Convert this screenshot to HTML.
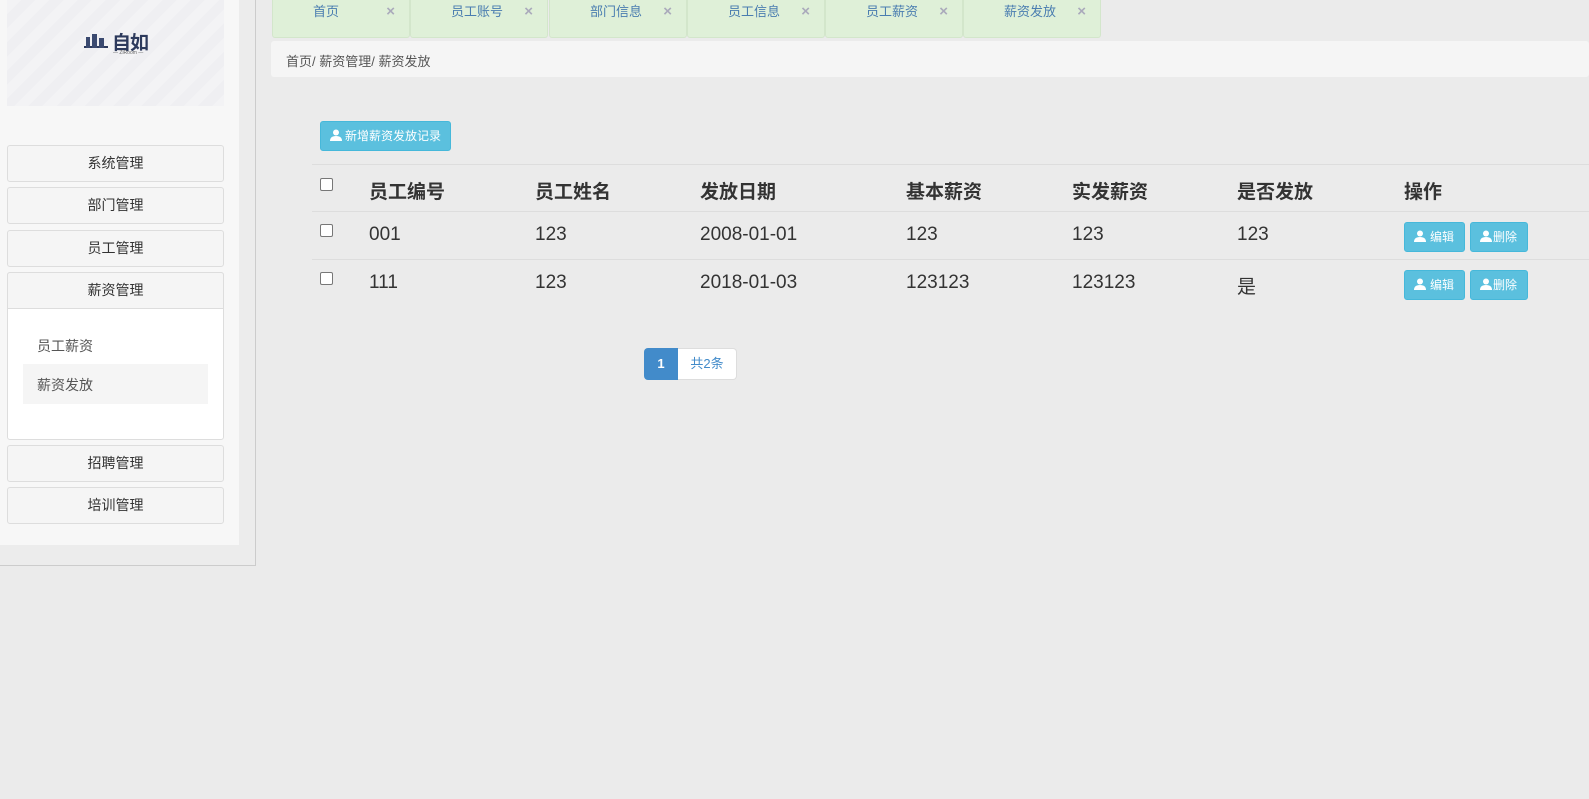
<!DOCTYPE html>
<html><head><meta charset="utf-8"><style>
*{box-sizing:border-box;margin:0;padding:0}
body{width:1589px;height:799px;background:#ebebeb;font-family:"Liberation Sans","Noto Sans CJK SC",sans-serif;position:relative;overflow:hidden;color:#333}
.a{position:absolute}
.side{left:0;top:0;width:256px;height:566px;border-right:1px solid #ccc;border-bottom:1px solid #ccc;background:#ececec}
.sp{left:0;top:0;width:239px;height:545px;background:#f7f7f7}
.logo{left:7px;top:0;width:217px;height:106px;background:repeating-linear-gradient(135deg,#f3f3f5 0 10px,#efeff2 10px 20px)}
.mi{left:7px;width:217px;height:37px;border:1px solid #ddd;border-radius:3px;background:#f5f5f5;font-size:14px;text-align:center;line-height:35px;color:#333}
.tab{top:0;height:38px;width:138px;background:#dff0d8;border:1px solid #d3e6cb;border-top:none;border-radius:0 0 3px 3px;font-size:13px;color:#4a7db0;line-height:24px;padding-left:40px}
.tab i{position:absolute;right:14px;top:0;font-style:normal;color:#aab;font-size:15px;font-weight:bold}
.btn{background:#5bc0de;border:1px solid #46b8da;border-radius:3px;color:#fff;font-size:12px}
.th{font-size:19px;font-weight:bold;color:#333}
.td{font-size:19px;color:#333}
.cb{width:13px;height:13px;border:1px solid #777;border-radius:2px;background:#fff}
.hl{left:312px;width:1277px;height:1px;background:#ddd}
</style></head><body>
<div class="a side"></div>
<div class="a sp"></div>
<div class="a logo"></div>
<div class="a" style="left:84px;top:34px;width:24px;height:14px;border-bottom:2px solid #2d3a5c">
<div class="a" style="left:2px;top:3px;width:4px;height:11px;background:#3b4a70"></div>
<div class="a" style="left:8px;top:0;width:5px;height:14px;background:#3b4a70"></div>
<div class="a" style="left:15px;top:4px;width:5px;height:10px;background:#3b4a70"></div></div>
<div class="a" style="left:112px;top:28px;font-size:19px;font-weight:bold;color:#2d3a5c;letter-spacing:-1px">自如</div>
<div class="a" style="left:113px;top:50px;font-size:5px;color:#666">— ZiRoom —</div>
<div class="a mi" style="top:145px">系统管理</div>
<div class="a mi" style="top:187px">部门管理</div>
<div class="a mi" style="top:230px">员工管理</div>
<div class="a" style="left:7px;top:272px;width:217px;height:168px;border:1px solid #ddd;border-radius:3px;background:#fff"></div>
<div class="a mi" style="top:272px;border-radius:3px 3px 0 0">薪资管理</div>
<div class="a" style="left:37px;top:336px;font-size:14px;color:#555">员工薪资</div>
<div class="a" style="left:23px;top:364px;width:185px;height:40px;background:#f5f5f5"></div>
<div class="a" style="left:37px;top:375px;font-size:14px;color:#555">薪资发放</div>
<div class="a mi" style="top:445px">招聘管理</div>
<div class="a mi" style="top:487px">培训管理</div>

<div class="a tab" style="left:272px">首页<i>×</i></div>
<div class="a tab" style="left:410px">员工账号<i>×</i></div>
<div class="a tab" style="left:549px">部门信息<i>×</i></div>
<div class="a tab" style="left:687px">员工信息<i>×</i></div>
<div class="a tab" style="left:825px">员工薪资<i>×</i></div>
<div class="a tab" style="left:963px">薪资发放<i>×</i></div>
<div class="a" style="left:271px;top:41px;width:1318px;height:36px;background:#f5f5f5;border-radius:3px"></div>
<div class="a" style="left:286px;top:51px;font-size:13px;color:#555">首页/ 薪资管理/ 薪资发放</div>

<div class="a btn" style="left:320px;top:121px;width:131px;height:30px;line-height:28px;padding-left:24px">新增薪资发放记录</div>
<svg class="a" style="left:330px;top:129px" width="12" height="12" viewBox="0 0 12 12"><circle cx="6" cy="3.5" r="3" fill="#fff"/><path d="M0 12 Q0 7 6 7 Q12 7 12 12Z" fill="#fff"/></svg>

<div class="hl a" style="top:164px"></div>
<div class="hl a" style="top:211px"></div>
<div class="hl a" style="top:259px"></div>
<div class="a cb" style="left:320px;top:178px"></div>
<div class="a cb" style="left:320px;top:224px"></div>
<div class="a cb" style="left:320px;top:272px"></div>
<div class="a th" style="left:369px;top:177px">员工编号</div>
<div class="a th" style="left:535px;top:177px">员工姓名</div>
<div class="a th" style="left:700px;top:177px">发放日期</div>
<div class="a th" style="left:906px;top:177px">基本薪资</div>
<div class="a th" style="left:1072px;top:177px">实发薪资</div>
<div class="a th" style="left:1237px;top:177px">是否发放</div>
<div class="a th" style="left:1404px;top:177px">操作</div>
<div class="a td" style="left:369px;top:224px">001</div>
<div class="a td" style="left:535px;top:224px">123</div>
<div class="a td" style="left:700px;top:224px">2008-01-01</div>
<div class="a td" style="left:906px;top:224px">123</div>
<div class="a td" style="left:1072px;top:224px">123</div>
<div class="a td" style="left:1237px;top:224px">123</div>
<div class="a td" style="left:369px;top:272px">111</div>
<div class="a td" style="left:535px;top:272px">123</div>
<div class="a td" style="left:700px;top:272px">2018-01-03</div>
<div class="a td" style="left:906px;top:272px">123123</div>
<div class="a td" style="left:1072px;top:272px">123123</div>
<div class="a td" style="left:1237px;top:272px">是</div>

<div class="a btn" style="left:1404px;top:222px;width:61px;height:30px;line-height:28px;padding-left:25px">编辑</div>
<div class="a btn" style="left:1470px;top:222px;width:58px;height:30px;line-height:28px;padding-left:22px">删除</div>
<div class="a btn" style="left:1404px;top:270px;width:61px;height:30px;line-height:28px;padding-left:25px">编辑</div>
<div class="a btn" style="left:1470px;top:270px;width:58px;height:30px;line-height:28px;padding-left:22px">删除</div>
<svg class="a" style="left:1414px;top:230px" width="12" height="12" viewBox="0 0 12 12"><circle cx="6" cy="3.5" r="3" fill="#fff"/><path d="M0 12 Q0 7 6 7 Q12 7 12 12Z" fill="#fff"/></svg>
<svg class="a" style="left:1480px;top:230px" width="12" height="12" viewBox="0 0 12 12"><circle cx="6" cy="3.5" r="3" fill="#fff"/><path d="M0 12 Q0 7 6 7 Q12 7 12 12Z" fill="#fff"/></svg>
<svg class="a" style="left:1414px;top:278px" width="12" height="12" viewBox="0 0 12 12"><circle cx="6" cy="3.5" r="3" fill="#fff"/><path d="M0 12 Q0 7 6 7 Q12 7 12 12Z" fill="#fff"/></svg>
<svg class="a" style="left:1480px;top:278px" width="12" height="12" viewBox="0 0 12 12"><circle cx="6" cy="3.5" r="3" fill="#fff"/><path d="M0 12 Q0 7 6 7 Q12 7 12 12Z" fill="#fff"/></svg>

<div class="a" style="left:644px;top:348px;width:34px;height:32px;background:#428bca;border-radius:4px 0 0 4px;color:#fff;font-size:13px;font-weight:bold;text-align:center;line-height:32px">1</div>
<div class="a" style="left:678px;top:348px;width:59px;height:32px;background:#fff;border:1px solid #ddd;border-left:none;border-radius:0 4px 4px 0;color:#428bca;font-size:13px;text-align:center;line-height:30px">共2条</div>
</body></html>
